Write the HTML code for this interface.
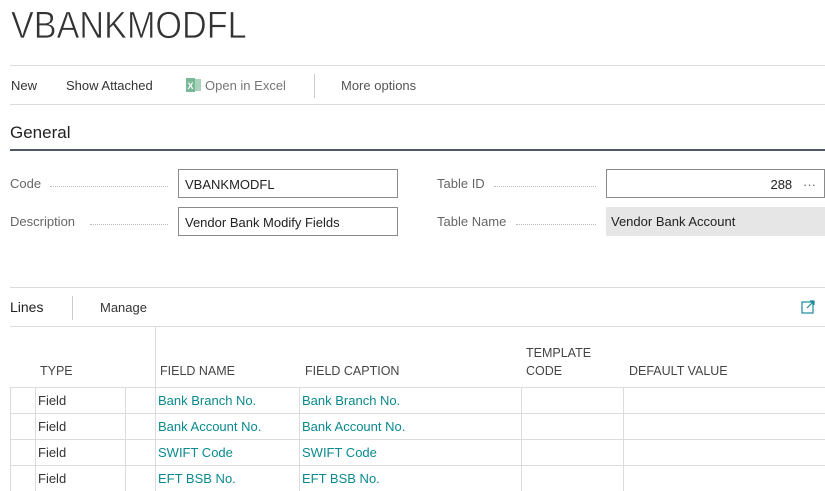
<!DOCTYPE html>
<html><head><meta charset="utf-8"><style>
*{margin:0;padding:0;box-sizing:border-box}
body{width:825px;height:491px;overflow:hidden;background:#fff;font-family:"Liberation Sans",sans-serif;color:#333;position:relative}
.a{position:absolute;white-space:nowrap}
.hl{position:absolute;height:1px;background:#dcdcdc}
.vl{position:absolute;width:1px;background:#dcdcdc}
.lbl{font-size:13px;color:#666}
.dots{position:absolute;border-top:1px dotted #bbb;height:0}
.inp{position:absolute;border:1px solid #8a8a8a;background:#fff;font-size:13px;color:#222;padding:7px 0 0 6px}
.th{font-size:12.5px;color:#444}
.td{font-size:13px}
.lk{color:#0a8a8e}
</style></head><body>
<div class="a" style="left:11px;top:5px;font-size:38px;color:#333;transform:scaleX(0.9);transform-origin:left;-webkit-text-stroke:0.7px #fff">VBANKMODFL</div>
<div class="hl" style="left:10px;width:815px;top:65px"></div>
<div class="a" style="left:11px;top:78px;font-size:13px">New</div>
<div class="a" style="left:66px;top:78px;font-size:13px">Show Attached</div>
<svg class="a" style="left:186px;top:78px" width="15" height="14"><rect x="0" y="0" width="9" height="14" fill="#7bb89a"/><rect x="9" y="1" width="6" height="12" fill="#a9d4bc"/><text x="1.5" y="11" font-size="9" fill="#fff" font-family="Liberation Sans" font-weight="bold">X</text></svg>
<div class="a" style="left:205px;top:78px;font-size:13px;color:#777">Open in Excel</div>
<div class="vl" style="left:314px;top:74px;height:24px;background:#ccc"></div>
<div class="a" style="left:341px;top:78px;font-size:13px;color:#555">More options</div>
<div class="hl" style="left:10px;width:815px;top:104px"></div>
<div class="a" style="left:10px;top:123px;font-size:17px;color:#222">General</div>
<div class="a" style="left:10px;top:149px;width:815px;height:2px;background:#505a64"></div>

<div class="a lbl" style="left:10px;top:176px">Code</div><div class="dots" style="left:50px;width:118px;top:186px"></div>
<div class="inp" style="left:178px;top:169px;width:220px;height:29px">VBANKMODFL</div>
<div class="a lbl" style="left:10px;top:214px">Description</div><div class="dots" style="left:90px;width:78px;top:224px"></div>
<div class="inp" style="left:178px;top:207px;width:220px;height:29px">Vendor Bank Modify Fields</div>
<div class="a lbl" style="left:437px;top:176px">Table ID</div><div class="dots" style="left:494px;width:102px;top:186px"></div>
<div class="inp" style="left:606px;top:169px;width:219px;height:29px;text-align:right;padding-right:8px">288 &nbsp;&nbsp;<span style="color:#666">···</span></div>
<div class="a lbl" style="left:437px;top:214px">Table Name</div><div class="dots" style="left:516px;width:80px;top:224px"></div>
<div class="a" style="left:606px;top:207px;width:219px;height:29px;background:#e6e6e6;font-size:13px;color:#222;padding:7px 0 0 5px">Vendor Bank Account</div>

<div class="hl" style="left:10px;width:815px;top:287px"></div>
<div class="a" style="left:10px;top:299px;font-size:14px;color:#222">Lines</div>
<div class="vl" style="left:72px;top:296px;height:24px;background:#ccc"></div>
<div class="a" style="left:100px;top:300px;font-size:13px">Manage</div>
<svg class="a" style="left:801px;top:300px" width="14" height="14"><rect x="1" y="2" width="11" height="11" fill="none" stroke="#1a8a9a" stroke-width="1.2"/><path d="M6 8 L13 1 M9 1 H13 V5" fill="none" stroke="#1a8a9a" stroke-width="1.2"/></svg>
<div class="hl" style="left:10px;width:815px;top:326px"></div>
<div class="vl" style="left:155px;top:326px;height:165px"></div>
<div class="a th" style="left:40px;top:364px">TYPE</div>
<div class="a th" style="left:160px;top:364px">FIELD NAME</div>
<div class="a th" style="left:305px;top:364px">FIELD CAPTION</div>
<div class="a th" style="left:526px;top:346px">TEMPLATE</div>
<div class="a th" style="left:526px;top:364px">CODE</div>
<div class="a th" style="left:629px;top:364px">DEFAULT VALUE</div>
<div class="hl" style="left:10px;width:815px;top:387px"></div>
<div class="hl" style="left:10px;width:815px;top:413px"></div>
<div class="hl" style="left:10px;width:815px;top:439px"></div>
<div class="hl" style="left:10px;width:815px;top:465px"></div>
<div class="vl" style="left:10px;top:387px;height:104px"></div>
<div class="vl" style="left:35px;top:387px;height:104px"></div>
<div class="vl" style="left:125px;top:387px;height:104px"></div>
<div class="vl" style="left:299px;top:387px;height:104px"></div>
<div class="vl" style="left:521px;top:387px;height:104px"></div>
<div class="vl" style="left:623px;top:387px;height:104px"></div>
<div class="a td" style="left:38px;top:393px">Field</div><div class="a td lk" style="left:158px;top:393px">Bank Branch No.</div><div class="a td lk" style="left:302px;top:393px">Bank Branch No.</div>
<div class="a td" style="left:38px;top:419px">Field</div><div class="a td lk" style="left:158px;top:419px">Bank Account No.</div><div class="a td lk" style="left:302px;top:419px">Bank Account No.</div>
<div class="a td" style="left:38px;top:445px">Field</div><div class="a td lk" style="left:158px;top:445px">SWIFT Code</div><div class="a td lk" style="left:302px;top:445px">SWIFT Code</div>
<div class="a td" style="left:38px;top:471px">Field</div><div class="a td lk" style="left:158px;top:471px">EFT BSB No.</div><div class="a td lk" style="left:302px;top:471px">EFT BSB No.</div>
</body></html>
